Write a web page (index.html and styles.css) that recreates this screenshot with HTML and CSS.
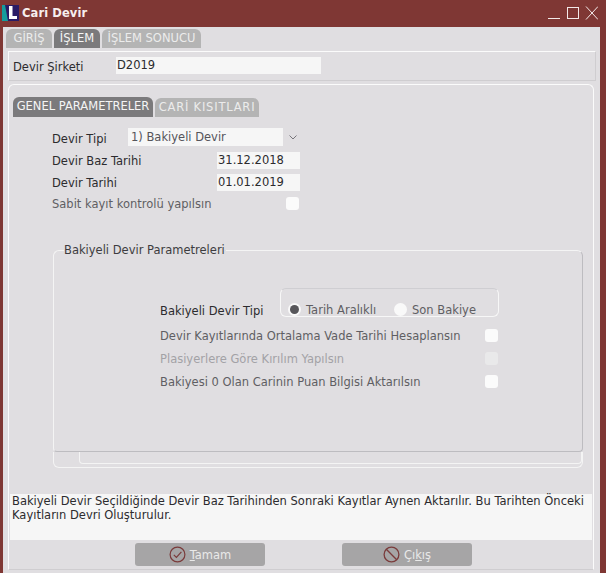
FILE: index.html
```html
<!DOCTYPE html>
<html lang="tr">
<head>
<meta charset="utf-8">
<title>Cari Devir</title>
<link rel="stylesheet" href="styles.css">
</head>
<body>
<div class="window">
  <header class="titlebar">
    <svg class="logo" width="17" height="16" viewBox="0 0 17 16"><rect width="17" height="16" fill="#2a1c66"/><path d="M0 0h3l3 16H0z" fill="#159c9c"/><path d="M7 1h3.5v10H15v3H7z" fill="#fff"/></svg>
    <span class="title">Cari Devir</span>
    <svg class="winbtns" width="52" height="14" viewBox="0 0 52 14" fill="none" stroke="#f3e9e8" stroke-width="1"><path d="M2 12.5h12"/><rect x="21.5" y="1.5" width="11" height="11"/><path d="M40 .5l12 13M52 .5l-12 13"/></svg>
  </header>
  <main class="client">
    <nav class="tabs top-tabs">
      <span class="tab t-giris">GİRİŞ</span>
      <span class="tab active t-islem">İŞLEM</span>
      <span class="tab t-sonuc">İŞLEM SONUCU</span>
    </nav>
    <section class="company">
      <span class="lbl company-lbl">Devir Şirketi</span>
      <span class="field company-field">D2019</span>
    </section>
    <section class="outer">
      <nav class="tabs inner-tabs">
        <span class="tab active t-genel">GENEL PARAMETRELER</span>
        <span class="tab t-cari">CARİ KISITLARI</span>
      </nav>
      <div class="form">
        <div class="row row-type">
          <span class="lbl">Devir Tipi</span>
          <span class="combo">1) Bakiyeli Devir</span>
          <svg class="chev" width="8" height="5" viewBox="0 0 8 5" fill="none" stroke="#77757a"><path d="M.5.5L4 4 7.5.5"/></svg>
        </div>
        <div class="row"><span class="lbl">Devir Baz Tarihi</span><span class="field date">31.12.2018</span></div>
        <div class="row"><span class="lbl">Devir Tarihi</span><span class="field date">01.01.2019</span></div>
        <div class="row row-check"><span class="lbl muted">Sabit kayıt kontrolü yapılsın</span><span class="check"></span></div>
      </div>
      <fieldset class="group">
        <legend>Bakiyeli Devir Parametreleri</legend>
        <div class="type-row">
          <span class="lbl type-lbl">Bakiyeli Devir Tipi</span>
          <div class="radios">
            <span class="radio on"></span><span class="muted r1">Tarih Aralıklı</span>
            <span class="radio"></span><span class="muted">Son Bakiye</span>
          </div>
        </div>
        <div class="opt"><span class="muted">Devir Kayıtlarında Ortalama Vade Tarihi Hesaplansın</span><span class="check"></span></div>
        <div class="opt"><span class="faint">Plasiyerlere Göre Kırılım Yapılsın</span><span class="check off"></span></div>
        <div class="opt"><span class="muted">Bakiyesi 0 Olan Carinin Puan Bilgisi Aktarılsın</span><span class="check"></span></div>
      </fieldset>
      <div class="scroll"><div class="thumb"></div></div>
      <p class="note">Bakiyeli Devir Seçildiğinde Devir Baz Tarihinden Sonraki Kayıtlar Aynen Aktarılır. Bu Tarihten Önceki Kayıtların Devri Oluşturulur.</p>
      <footer class="actions">
        <button class="btn" type="button">
          <svg width="17" height="17" viewBox="0 0 17 17" fill="none" stroke="#7a3b3b" stroke-width="1.2"><circle cx="8.5" cy="8.5" r="7.4"/><path d="M4.8 8.8l2.6 2.6 5-5.6"/></svg>
          <span><u>T</u>amam</span>
        </button>
        <button class="btn" type="button">
          <svg width="17" height="17" viewBox="0 0 17 17" fill="none" stroke="#7a3b3b" stroke-width="1.3"><circle cx="8.5" cy="8.5" r="7.4"/><path d="M3.3 3.3l10.4 10.4"/></svg>
          <span>Çı<u>k</u>ış</span>
        </button>
      </footer>
    </section>
  </main>
</div>
</body>
</html>
```
FILE: styles.css
```css
* { box-sizing: border-box; }
html, body { margin: 0; height: 100%; }
body {
  background: #7f3734;
  font: 11.5px "DejaVu Sans", Verdana, sans-serif;
  color: #2c2b2e;
  overflow: hidden;
}
.window { width: 606px; height: 573px; display: flex; flex-direction: column; }
.titlebar { height: 27px; display: flex; align-items: center; padding: 0 8px 2px 2px; color: #f6eeee; flex: none; }
.logo { flex: none; }
.title { margin-left: 3px; font-weight: bold; font-size: 11.5px; letter-spacing: .1px; }
.winbtns { margin-left: auto; }
.client { width: 597px; margin-left: 3px; flex: 1; background: #e0dee1; padding-top: 2px; }
.tabs { display: flex; gap: 2px; }
.top-tabs { margin-left: 3px; height: 19px; }
.tab {
  background: #b4b4b4; color: #ececec; border-radius: 6px 6px 0 0;
  display: flex; align-items: center; justify-content: center;
  white-space: nowrap; padding-bottom: 1px;
}
.tab.active { background: #7b7a7c; color: #f5f5f5; }
.t-giris, .t-islem { width: 46px; }
.t-sonuc { width: 99px; }
.company {
  margin: 3px 0 0 5px; width: 588px; height: 30px;
  border: 1px solid #cfcdd0; border-top-color: #fbfbfb; border-left-color: #fbfbfb;
  display: flex; align-items: center;
}
.lbl { white-space: nowrap; }
.company-lbl { margin-left: 4px; width: 103px; padding-top: 2px; }
.field { background: #f6f6f6; height: 17px; display: flex; align-items: center; }
.company-field { width: 205px; padding-left: 1px; margin-top: -2px; }
.outer {
  margin: 3px 0 0 5px; width: 586px; height: 486px;
  border: 1px solid #cfcdd0; border-top-color: #fbfbfb; border-left-color: #fbfbfb;
  border-right-color: #fbfbfb; border-radius: 6px 6px 0 0;
  padding-top: 12px;
}
.inner-tabs { margin-left: 4px; height: 20px; }
.t-genel { width: 140px; padding: 0 0 2px; }
.t-cari { width: 104px; height: 19px; margin-top: 1px; letter-spacing: .8px; }
.form { padding: 10px 0 0 43px; }
.row { display: flex; align-items: center; height: 22px; }
.row .lbl { width: 165px; padding-top: 2px; }
.row-type .lbl { width: 76px; }
.combo { background: #f6f6f6; width: 155px; height: 18px; display: flex; align-items: center; padding-left: 3px; color: #55545a; margin-top: -3px; }
.chev { margin-left: 6px; margin-top: -1px; }
.date { width: 83px; height: 17px; padding-left: 1px; }
.row-check { height: 20px; }
.row-check .lbl { width: 234px; }
.muted { color: #5f5e63; }
.faint { color: #a3a2a6; }
.check { width: 13px; height: 13px; border-radius: 3px; background: #fbfbfb; flex: none; }
.check.off { background: #e9e9ea; }
.group {
  margin: 30px 0 0 44px; padding: 0; width: 530px; height: 209px;
  border: 1px solid #bdbcc0; border-top-color: #f4f4f4; border-left-color: #f4f4f4;
  border-radius: 6px 6px 4px 4px;
}
.group legend { padding: 0 1px 0 0; margin-left: 10px; color: #3d3c40; }
.type-row { display: flex; margin: 31px 0 6px; padding-left: 106px; }
.type-lbl { width: 120px; padding-top: 16px; }
.radios {
  width: 219px; height: 29px; border: 1px solid #f7f7f7; border-top-color: #cfced2;
  border-radius: 6px; display: flex; align-items: center; padding: 14px 0 0 7px;
}
.radio { width: 13px; height: 13px; border-radius: 50%; background: #f9f9f9; flex: none; margin-right: 5px; display: flex; align-items: center; justify-content: center; }
.radio.on::after { content: ""; width: 9px; height: 9px; border-radius: 50%; background: #57565a; }
.r1 { width: 88px; }
.opt { display: flex; align-items: center; justify-content: space-between; height: 23px; margin-left: 106px; width: 338px; }
.scroll {
  margin: 0 0 0 44px; width: 530px; height: 16px;
  border: 1px solid #f4f4f4; border-top: 0; border-radius: 0 0 6px 6px;
  padding-left: 25px;
}
.thumb { height: 12px; border: 1px solid #bdbcc0; border-top: 0; border-left-color: #f4f4f4; border-right-color: #f4f4f4; border-bottom-color: #f4f4f4; border-radius: 0 0 4px 4px; }
.note {
  margin: 26px 0 0 1px; width: 582px; height: 46px; background: #f6f6f6; padding: 0 2px;
  color: #2c2b2e; line-height: 14px;
}
.actions { display: flex; padding: 3px 0 0 126px; gap: 77px; }
.btn {
  width: 130px; height: 23px; border: 0; border-radius: 3px; background: #a6a5a6; color: #e9e9e9;
  font: inherit; display: flex; align-items: center; justify-content: center; gap: 4px; padding: 0;
}
```
